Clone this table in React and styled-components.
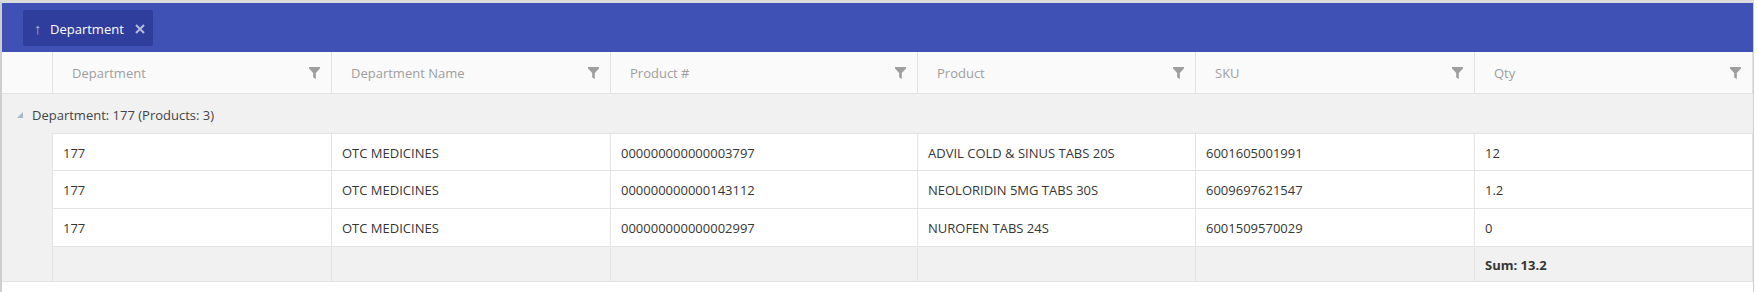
import React from "react";
import styled, { createGlobalStyle } from "styled-components";

const Global = createGlobalStyle`
  html, body { margin: 0; padding: 0; background: #ffffff; }
  body { font-family: "Open Sans", "Noto Sans", sans-serif; font-size: 13px; }
`;

const COLS = "51px 279px 279px 307px 278px 279px 1fr";

const Grid = styled.div`
  width: 1754px;
  height: 292px;
  box-sizing: border-box;
  border-top: 3px solid #dcdcdc;
  border-left: 2px solid #cfcfcf;
  border-right: 1px solid #cfcfcf;
  background: #fff;
  overflow: hidden;
`;

const Toolbar = styled.div`
  height: 49px;
  background: #3f51b5;
  display: flex;
  align-items: flex-start;
  padding: 7px 0 0 21px;
  box-sizing: border-box;
`;

const Chip = styled.div`
  height: 36px;
  display: flex;
  align-items: center;
  padding: 1px 8px 0 11px;
  box-sizing: border-box;
  background: #2f3e9c;
  border-radius: 2px;
  color: #fff;
  font-size: 13px;
`;

const ChipArrow = styled.span`
  color: rgba(255, 255, 255, 0.6);
  font-size: 15px;
  width: 16px;
  margin-top: -2px;
`;

const ChipClose = styled.span`
  margin-left: 11px;
  display: flex;
`;

const Row = styled.div`
  display: grid;
  grid-template-columns: ${COLS};
  height: ${(p) => p.$h}px;
  box-sizing: border-box;
`;

const HeaderRow = styled(Row)`
  background: #fafafa;
  border-bottom: 1px solid #e3e3e3;
`;

const HeadCell = styled.div`
  display: flex;
  align-items: center;
  justify-content: space-between;
  padding: 1px 11px 0 19px;
  border-right: 1px solid #e3e3e3;
  color: #9e9e9e;
  font-size: 13px;
`;

const Indent = styled.div`
  background: ${(p) => (p.$light ? "#fafafa" : "#f1f1f1")};
  border-right: 1px solid #e3e3e3;
`;

const GroupRow = styled.div`
  height: 39px;
  box-sizing: border-box;
  padding: 3px 0 0 15px;
  background: #f1f1f1;
  display: flex;
  align-items: center;
  gap: 9px;
  color: #444;
  font-size: 13px;
`;

const Cell = styled.div`
  display: flex;
  align-items: center;
  padding: 1px 10px 0;
  background: ${(p) => (p.$foot ? "#f1f1f1" : "#fff")};
  border-right: 1px solid #e3e3e3;
  border-top: 1px solid #e3e3e3;
  color: #363636;
  font-size: 13px;
  font-weight: ${(p) => (p.$bold ? 700 : 400)};
`;

const FooterRow = styled(Row)`
  border-bottom: 1px solid #e3e3e3;
`;

const Filter = () => (
  <svg width="11" height="12" viewBox="0 0 11 12">
    <path d="M0 0 H11 V1.5 L6.8 6 V12 L4.2 10.5 V6 L0 1.5 Z" fill="#9e9e9e" />
  </svg>
);

const Expander = () => (
  <svg width="6" height="6" viewBox="0 0 6 6">
    <path d="M6 0 V6 H0 Z" fill="#a9b8c8" />
  </svg>
);

const headers = ["Department", "Department Name", "Product #", "Product", "SKU", "Qty"];

const rows = [
  ["177", "OTC MEDICINES", "000000000000003797", "ADVIL COLD & SINUS TABS 20S", "6001605001991", "12"],
  ["177", "OTC MEDICINES", "000000000000143112", "NEOLORIDIN 5MG TABS 30S", "6009697621547", "1.2"],
  ["177", "OTC MEDICINES", "000000000000002997", "NUROFEN TABS 24S", "6001509570029", "0"],
];

export default function App() {
  return (
    <>
      <Global />
      <Grid>
        <Toolbar>
          <Chip>
            <ChipArrow>↑</ChipArrow>
            Department
            <ChipClose>
              <svg width="10" height="10" viewBox="0 0 10 10">
                <path d="M1 1 L9 9 M9 1 L1 9" stroke="rgba(255,255,255,0.65)" strokeWidth="2" />
              </svg>
            </ChipClose>
          </Chip>
        </Toolbar>
        <HeaderRow $h={42}>
          <Indent $light />
          {headers.map((h) => (
            <HeadCell key={h}>
              {h}
              <Filter />
            </HeadCell>
          ))}
        </HeaderRow>
        <GroupRow>
          <Expander />
          Department: 177 (Products: 3)
        </GroupRow>
        {rows.map((r, i) => (
          <Row key={i} $h={i === 0 ? 37 : 38}>
            <Indent />
            {r.map((c, j) => (
              <Cell key={j}>{c}</Cell>
            ))}
          </Row>
        ))}
        <FooterRow $h={36}>
          <Indent />
          {[0, 1, 2, 3, 4].map((k) => (
            <Cell key={k} $foot />
          ))}
          <Cell $foot $bold>Sum: 13.2</Cell>
        </FooterRow>
      </Grid>
    </>
  );
}
